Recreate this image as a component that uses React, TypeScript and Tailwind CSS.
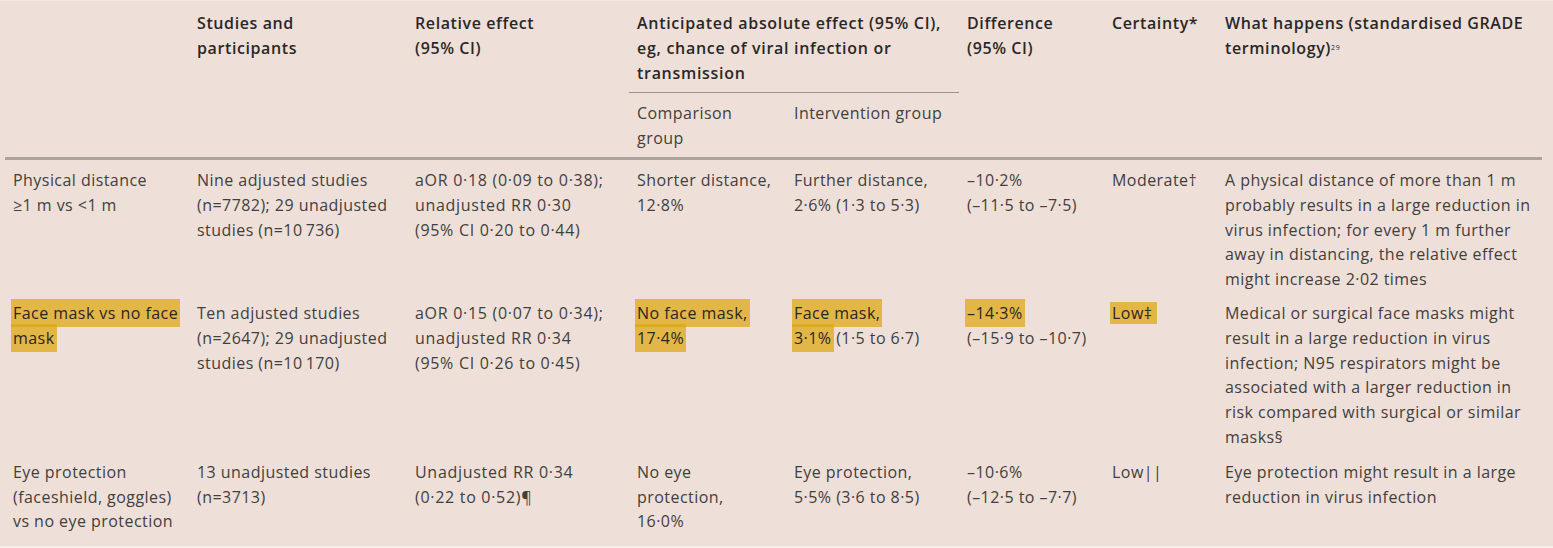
import React from 'react'

const cols = 'grid grid-cols-[184px_218px_222px_157px_173px_145px_113px_325px]'

// highlighted run of text, like a marker pen over a printed page
function Mark({ children, tight }: { children: React.ReactNode; tight?: boolean }) {
  return (
    <span
      className={`bg-[#dda50a]/70 px-[2px] -mx-[2px] text-[#2a2624] [box-decoration-break:clone] ${
        tight ? 'py-0 pr-[5px]' : 'py-[3px]'
      }`}
    >
      {children}
    </span>
  )
}

function Cell({ children, className = '' }: { children?: React.ReactNode; className?: string }) {
  return <div className={`pl-[8px] whitespace-nowrap ${className}`}>{children}</div>
}

type Row = {
  cells: React.ReactNode[]
  pt: string
}

const rows: Row[] = [
  {
    pt: 'pt-[8px]',
    cells: [
      <>Physical distance<br />≥1 m vs &lt;1 m</>,
      <>Nine adjusted studies<br />(n=7782); 29 unadjusted<br />studies (n=10{'\u2009'}736)</>,
      <>aOR 0·18 (0·09 to 0·38);<br />unadjusted RR 0·30<br />(95% CI 0·20 to 0·44)</>,
      <>Shorter distance,<br />12·8%</>,
      <>Further distance,<br />2·6% (1·3 to 5·3)</>,
      <>–10·2%<br />(–11·5 to –7·5)</>,
      <>Moderate†</>,
      <>
        A physical distance of more than 1 m<br />probably results in a large reduction in<br />virus infection; for every 1 m further
        <br />away in distancing, the relative effect<br />might increase 2·02 times
      </>,
    ],
  },
  {
    pt: 'pt-[9px]',
    cells: [
      <Mark>Face mask vs no face<br />mask</Mark>,
      <>Ten adjusted studies<br />(n=2647); 29 unadjusted<br />studies (n=10{'\u2009'}170)</>,
      <>aOR 0·15 (0·07 to 0·34);<br />unadjusted RR 0·34<br />(95% CI 0·26 to 0·45)</>,
      <Mark>No face mask,<br />17·4%</Mark>,
      <><Mark>Face mask,<br />3·1%</Mark> (1·5 to 6·7)</>,
      <><Mark>–14·3%</Mark><br />(–15·9 to –10·7)</>,
      <Mark tight>Low‡</Mark>,
      <>
        Medical or surgical face masks might<br />result in a large reduction in virus<br />infection; N95 respirators might be
        <br />associated with a larger reduction in<br />risk compared with surgical or similar<br />masks§
      </>,
    ],
  },
  {
    pt: 'pt-[10px]',
    cells: [
      <>Eye protection<br />(faceshield, goggles)<br />vs no eye protection</>,
      <>13 unadjusted studies<br />(n=3713)</>,
      <>Unadjusted RR 0·34<br />(0·22 to 0·52)¶</>,
      <>No eye<br />protection,<br />16·0%</>,
      <>Eye protection,<br />5·5% (3·6 to 8·5)</>,
      <>–10·6%<br />(–12·5 to –7·7)</>,
      <>Low||</>,
      <>Eye protection might result in a large<br />reduction in virus infection</>,
    ],
  },
]

export default function App() {
  return (
    <div className="h-[548px] w-[1553px] overflow-hidden border-t border-b-2 border-t-[#f3e9e4] border-b-[#f6eeea] bg-[#eee0d9] font-['Open_Sans',sans-serif] text-[16px] leading-[24.8px] text-[#423e3c]">
      <div className="ml-[5px] w-[1537px] pt-[10px]">
        {/* header */}
        <div className={`${cols} border-b-[3px] border-[#aaa39f] font-semibold tracking-[0.6px] text-[#2a2827]`}>
          <Cell className="row-span-2" />
          <Cell className="row-span-2">Studies and<br />participants</Cell>
          <Cell className="row-span-2">Relative effect<br />(95% CI)</Cell>
          <Cell className="col-span-2 border-b border-[#9a9592] pb-[7px] tracking-[0.7px]">
            Anticipated absolute effect (95% CI),<br />eg, chance of viral infection or<br />transmission
          </Cell>
          <Cell className="row-span-2">Difference<br />(95% CI)</Cell>
          <Cell className="row-span-2">Certainty*</Cell>
          <Cell className="row-span-2">
            What happens (standardised GRADE<br />terminology)
            <sup className="text-[7px] font-normal">29</sup>
          </Cell>
          <Cell className="pt-[8px] pb-[6px] font-normal tracking-[0.45px] text-[#423e3c]">Comparison<br />group</Cell>
          <Cell className="pt-[8px] pb-[6px] font-normal tracking-[0.45px] text-[#423e3c]">Intervention group</Cell>
        </div>

        {/* body */}
        {rows.map((row, i) => (
          <div key={i} className={`${cols} ${row.pt} tracking-[0.45px]`}>
            {row.cells.map((c, j) => (
              <Cell key={j} className={j === 2 ? 'tracking-[0.7px]' : ''}>
                {c}
              </Cell>
            ))}
          </div>
        ))}
      </div>
    </div>
  )
}
